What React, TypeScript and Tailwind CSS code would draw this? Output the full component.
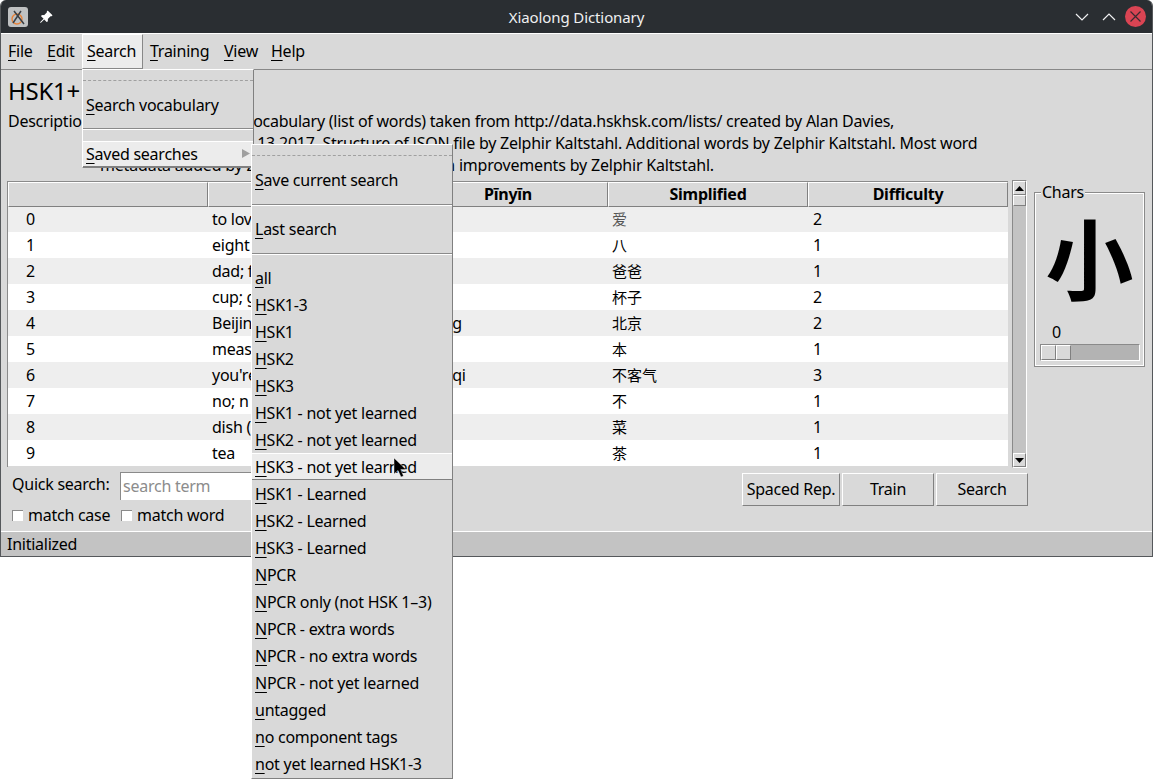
import React from "react";
import { BsPinAngleFill } from "react-icons/bs";

const font = { fontFamily: '"Noto Sans", "Noto Sans CJK SC", sans-serif' };
const rows = [
  ["0", "to love", "ài", "爱", "2"],
  ["1", "eight", "bā", "八", "1"],
  ["2", "dad; father", "bàba", "爸爸", "1"],
  ["3", "cup; glass", "bēizi", "杯子", "2"],
  ["4", "Beijing", "Běijīng", "北京", "2"],
  ["5", "measure word", "běn", "本", "1"],
  ["6", "you're welcome", "bú kèqi", "不客气", "3"],
  ["7", "no; not", "bù", "不", "1"],
  ["8", "dish (food)", "cài", "菜", "1"],
  ["9", "tea", "chá", "茶", "1"],
];
const saved = [
  "all", "HSK1-3", "HSK1", "HSK2", "HSK3",
  "HSK1 - not yet learned", "HSK2 - not yet learned", "HSK3 - not yet learned",
  "HSK1 - Learned", "HSK2 - Learned", "HSK3 - Learned",
  "NPCR", "NPCR only (not HSK 1–3)", "NPCR - extra words", "NPCR - no extra words", "NPCR - not yet learned",
  "untagged", "no component tags", "not yet learned HSK1-3",
];

function U({ t }: { t: string }) {
  return (
    <span className="whitespace-nowrap">
      <span className="underline decoration-1 underline-offset-[3px]">{t[0]}</span>
      {t.slice(1)}
    </span>
  );
}

function MenuBarItem({ t, active, cls }: { t: string; active?: boolean; cls: string }) {
  return (
    <div className={`h-[35px] pb-[2px] flex items-center shrink-0 ${cls} ${active
      ? "bg-[#ececec] border-t border-l border-t-white border-l-white border-r border-b border-r-[#888888] border-b-[#888888]"
      : ""}`}>
      <U t={t} />
    </div>
  );
}

function Btn({ t, w }: { t: string; w: string }) {
  return (
    <div className={`${w} h-[33px] pb-[2px] flex items-center justify-center border border-t-white border-l-white border-r-[#808080] border-b-[#808080] whitespace-nowrap`}>
      {t}
    </div>
  );
}

function Sep() {
  return <div className="h-[2px] border-t border-t-[#8a8a8a] border-b border-b-white" />;
}

function Arrow({ up }: { up?: boolean }) {
  return (
    <div className="h-[14px] w-full bg-[#d9d9d9] border border-t-white border-l-white border-r-[#808080] border-b-[#808080] flex items-center justify-center">
      <svg width="9" height="5" viewBox="0 0 9 5">
        <polygon points={up ? "4.5,0 9,5 0,5" : "0,0 9,0 4.5,5"} fill="#000" />
      </svg>
    </div>
  );
}

export default function App() {
  return (
    <div className="relative w-[1153px] h-[779px] bg-white overflow-hidden text-[16px] leading-[22px] tracking-[-0.25px] text-black" style={font}>
      <div className="w-full h-[557px] flex flex-col bg-[#d9d9d9] rounded-t-[6px] overflow-hidden border-x border-b border-x-[#55585b] border-b-[#55585b]">
        {/* Title bar */}
        <div className="h-[33px] shrink-0 bg-[#2a2e32] flex items-center relative text-[#eff0f1] text-[15px] tracking-[-0.1px]">
          <div className="ml-[7px] w-[20px] h-[20px] rounded-[3px] bg-[#bfc1c2] flex items-center justify-center">
            <svg width="18" height="18" viewBox="0 0 18 18" fill="none">
              <circle cx="8" cy="11" r="5" stroke="#e8833a" strokeWidth="1.4" />
              <path d="M5 3 L15 16 M12 3 L4 15" stroke="#3a3f44" strokeWidth="1.5" />
            </svg>
          </div>
          <BsPinAngleFill className="ml-[11px] text-white" size={14} />
          <div className="absolute inset-x-0 text-center">Xiaolong Dictionary</div>
          <div className="ml-auto flex items-center">
            <svg width="14" height="8" viewBox="0 0 14 8" fill="none" className="mr-[13px]"><path d="M1 1 L7 7 L13 1" stroke="#eff0f1" strokeWidth="1.2" /></svg>
            <svg width="14" height="8" viewBox="0 0 14 8" fill="none" className="mr-[9px]"><path d="M1 7 L7 1 L13 7" stroke="#eff0f1" strokeWidth="1.2" /></svg>
            <svg width="21" height="21" viewBox="0 0 21 21" className="mr-[6px]">
              <circle cx="10.5" cy="10.5" r="10.5" fill="#da4453" />
              <path d="M5.5 5.5 L15.5 15.5 M15.5 5.5 L5.5 15.5" stroke="#3a2a30" strokeWidth="1.2" />
            </svg>
          </div>
        </div>
        {/* Menu bar */}
        <div className="h-[37px] shrink-0 flex items-start border-t border-t-white border-b border-b-[#888888]">
          <MenuBarItem t="File" cls="w-[39px] pl-[7px]" />
          <MenuBarItem t="Edit" cls="w-[42px] pl-[7px]" />
          <MenuBarItem t="Search" active cls="w-[61px] pl-[4px]" />
          <MenuBarItem t="Training" cls="w-[74px] pl-[7px]" />
          <MenuBarItem t="View" cls="w-[47px] pl-[7px]" />
          <MenuBarItem t="Help" cls="pl-[7px]" />
        </div>
        {/* Body */}
        <div className="flex-1 min-h-0 flex flex-col">
          <div className="px-[7px] pt-[5px] h-[112px] shrink-0">
            <div className="text-[24px] leading-[32px] h-[35px]">HSK1+<span className="ml-[4px]">2+3</span></div>
            <div className="flex whitespace-nowrap">
              <div className="w-[92px] shrink-0">Description:</div>
              <div>
                <div className="-ml-[7px]">Contains the HSK1-3 vocabulary (list of words) taken from http://data.hskhsk.com/lists/ created by Alan Davies,</div>
                <div>It was updated on 01.13.2017. Structure of JSON file by Zelphir Kaltstahl. Additional words by Zelphir Kaltstahl. Most word</div>
                <div className="tracking-[-0.19px]">metadata added by Zelphir Kaltstahl. Translation improvements by Zelphir Kaltstahl.</div>
              </div>
            </div>
          </div>
          <div className="flex pl-[6px] shrink-0">
            {/* Table */}
            <div className="w-[1001px] h-[286px] border-l border-l-[#8a8a8a] border-t border-t-[#8a8a8a] -mt-px">
              <div className="grid grid-cols-[200px_200px_200px_200px_200px] h-[24px] font-bold text-[16px] leading-[23px] text-center">
                {["", "English", "Pīnyīn", "Simplified", "Difficulty"].map((h, i) => (
                  <div key={i} className="border border-t-white border-l-white border-r-[#808080] border-b-[#808080]">{h}</div>
                ))}
              </div>
              {rows.map((r, i) => (
                <div key={i} className={`grid grid-cols-[200px_200px_200px_200px_200px] h-[26px] leading-[26px] ${i % 2 === 0 ? "bg-[#eeeeee]" : "bg-white"}`}>
                  <div className="pl-[18px]">{r[0]}</div>
                  <div className="pl-[4px]">
                    {r[1] === "no; not" ? <>no; n<span className="ml-[3px]">ot</span></> : r[1]}
                  </div>
                  <div className="pl-[4px]">{r[2]}</div>
                  <div className={`pl-[4px] text-[15px] tracking-normal ${i === 0 ? "text-[#555555]" : ""}`}>{r[3]}</div>
                  <div className="pl-[5px]">{r[4]}</div>
                </div>
              ))}
            </div>
            {/* Scrollbar */}
            <div className="ml-[4px] w-[15px] h-[288px] -mt-[2px] bg-[#c3c3c3] border border-t-[#8a8a8a] border-l-[#8a8a8a] border-r-white border-b-white flex flex-col">
              <Arrow up />
              <div className="h-[11px] bg-[#d9d9d9] border border-t-white border-l-white border-r-[#808080] border-b-[#808080]" />
              <div className="flex-1" />
              <Arrow />
            </div>
            {/* Chars */}
            <div className="relative ml-[7px] mt-[10px] w-[111px] h-[175px] border border-[#8a8a8a] outline outline-1 -outline-offset-2 outline-white flex flex-col items-start">
              <div className="absolute left-[6px] -top-[12px] bg-[#d9d9d9] px-px leading-[22px]">Chars</div>
              <div className="w-full h-[124px] mb-[6px] flex items-center justify-center text-[88px] font-bold leading-[124px]" style={{ fontFamily: '"Noto Sans CJK SC", sans-serif' }}>小</div>
              <div className="ml-[17px] mt-[-2px] h-[22px]">0</div>
              <div className="ml-[5px] mt-[1px] w-[100px] h-[17px] bg-[#b3b3b3] border border-t-[#8a8a8a] border-l-[#8a8a8a] border-r-white border-b-white flex">
                <div className="w-[15px] h-full bg-[#d9d9d9] border border-t-white border-l-white border-r-[#808080] border-b-[#808080]" />
                <div className="w-[15px] h-full bg-[#d9d9d9] border border-t-white border-l-white border-r-[#808080] border-b-[#808080]" />
              </div>
            </div>
          </div>
          {/* Controls */}
          <div className="flex pl-[11px] pt-[6px] shrink-0 h-[65px] -mt-[2px]">
            <div className="flex flex-col">
              <div className="flex items-center h-[28px]">
                <div className="w-[108px] -mt-[5px]">Quick search:</div>
                <div className="w-[300px] h-[28px] bg-white border-t border-l border-t-[#8a8a8a] border-l-[#8a8a8a] text-[#8c8c8c] pl-[2px] leading-[27px]">search term</div>
              </div>
              <div className="flex items-center mt-[4px] h-[22px]">
                <div className="w-[11px] h-[11px] bg-white border-t border-l border-t-[#8a8a8a] border-l-[#8a8a8a]" />
                <div className="ml-[5px] w-[93px]">match case</div>
                <div className="w-[11px] h-[11px] bg-white border-t border-l border-t-[#8a8a8a] border-l-[#8a8a8a]" />
                <div className="ml-[5px]">match word</div>
              </div>
            </div>
            <div className="ml-auto mr-[124px] flex gap-[2px] pt-px">
              <Btn t="Spaced Rep." w="w-[98px]" />
              <Btn t="Train" w="w-[92px]" />
              <Btn t="Search" w="w-[92px]" />
            </div>
          </div>
          {/* Status */}
          <div className="flex-1 bg-[#c3c3c3] border-t border-t-white pl-[6px] leading-[24px]">Initialized</div>
        </div>
      </div>

      {/* Search menu */}
      <div className="absolute left-[82px] top-[69px] w-[172px] h-[99px] bg-[#d9d9d9] border border-t-white border-l-white border-r-[#808080] border-b-[#808080] flex flex-col">
        <div className="pt-[10px]"><div className="border-t border-dashed border-t-[#a0a0a0]" /></div>
        <div className="h-[48px] flex items-center pl-[3px]"><U t="Search vocabulary" /></div>
        <Sep />
        <div className="mt-[11px] h-[26px] bg-[#ececec] border-t border-t-white border-b border-b-[#808080] flex items-center pl-[3px] relative">
          <U t="Saved searches" />
          <svg width="8" height="9" viewBox="0 0 8 9" className="absolute right-[3px] top-[7px]"><polygon points="0,0 8,4.5 0,9" fill="#a0a0a0" /></svg>
        </div>
      </div>

      {/* Submenu */}
      <div className="absolute left-[251px] top-[144px] w-[202px] h-[635px] bg-[#d9d9d9] border border-t-white border-l-white border-r-[#808080] border-b-[#808080] flex flex-col">
        <div className="pt-[10px]"><div className="border-t border-dashed border-t-[#a0a0a0]" /></div>
        <div className="h-[48px] flex items-center pl-[3px]"><U t="Save current search" /></div>
        <Sep />
        <div className="h-[47px] pb-[1px] flex items-center pl-[3px]"><U t="Last search" /></div>
        <Sep />
        <div className="pt-[9px]">
          {saved.map((s) => (
            <div key={s} className={`h-[27px] flex items-center pl-[3px] ${s === "HSK3 - not yet learned" ? "bg-[#ececec] border-t border-t-white border-b border-b-[#808080]" : ""}`}>
              <U t={s} />
            </div>
          ))}
        </div>
      </div>

      {/* Cursor */}
      <svg width="14" height="22" viewBox="0 0 14 22" className="absolute left-[393px] top-[457px]">
        <path d="M1 1 L1 17 L5 13.5 L8 20 L10.5 19 L7.8 12.5 L13 12.5 Z" fill="#000" stroke="#ffffff" strokeOpacity="0.6" strokeWidth="0.7" />
      </svg>
    </div>
  );
}
